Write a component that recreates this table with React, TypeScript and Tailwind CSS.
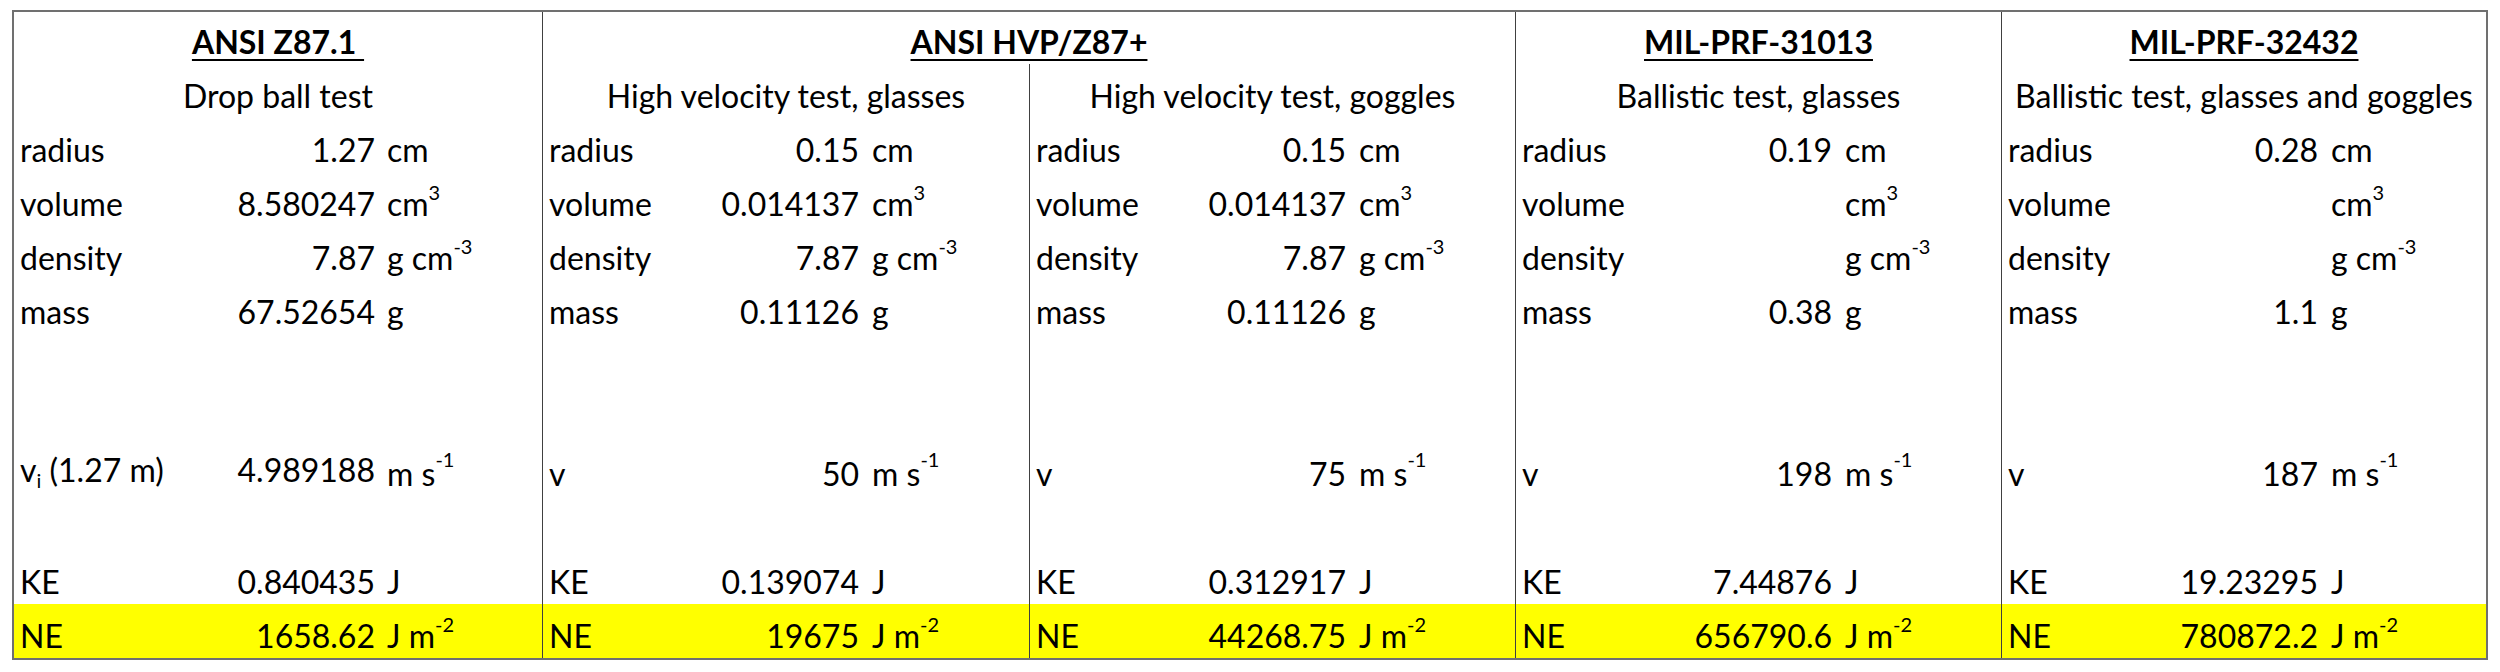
import React from 'react';

interface Block {
  title?: string;
  subtitle: string;
  radius: string;
  volume: string;
  density: string;
  mass: string;
  vLabel: React.ReactNode;
  v: string;
  ke: string;
  ne: string;
}

interface RowData {
  label: React.ReactNode;
  value: string;
  unit: string;
  sup?: string;
  yellow?: boolean;
  high?: boolean;
}

const VI = (
  <>
    v<span className="text-[20px] align-[-6px]">i</span> (1.27 m)
  </>
);

const blocks: Block[] = [
  {
    title: 'ANSI Z87.1\u00a0',
    subtitle: 'Drop ball test',
    radius: '1.27',
    volume: '8.580247',
    density: '7.87',
    mass: '67.52654',
    vLabel: VI,
    v: '4.989188',
    ke: '0.840435',
    ne: '1658.62',
  },
  {
    subtitle: 'High velocity test, glasses',
    radius: '0.15',
    volume: '0.014137',
    density: '7.87',
    mass: '0.11126',
    vLabel: 'v',
    v: '50',
    ke: '0.139074',
    ne: '19675',
  },
  {
    subtitle: 'High velocity test, goggles',
    radius: '0.15',
    volume: '0.014137',
    density: '7.87',
    mass: '0.11126',
    vLabel: 'v',
    v: '75',
    ke: '0.312917',
    ne: '44268.75',
  },
  {
    title: 'MIL-PRF-31013',
    subtitle: 'Ballistic test, glasses',
    radius: '0.19',
    volume: '',
    density: '',
    mass: '0.38',
    vLabel: 'v',
    v: '198',
    ke: '7.44876',
    ne: '656790.6',
  },
  {
    title: 'MIL-PRF-32432',
    subtitle: 'Ballistic test, glasses and goggles',
    radius: '0.28',
    volume: '',
    density: '',
    mass: '1.1',
    vLabel: 'v',
    v: '187',
    ke: '19.23295',
    ne: '780872.2',
  },
];

const Title = ({ text }: { text: string }) => (
  <div className="h-[52px] flex items-end justify-center pb-[6px] leading-none font-bold">
    <span className="underline decoration-2 underline-offset-[5px] whitespace-pre">{text}</span>
  </div>
);

const Cell = ({ row, wide }: { row: RowData | null; wide: boolean }) => {
  if (!row) return <div className="h-[54px]" />;
  return (
    <div
      className={`h-[54px] flex items-end pb-[6px] leading-none whitespace-pre ${
        row.yellow ? 'bg-[#ffff00]' : ''
      }`}
    >
      <div className={`flex justify-between pl-[6px] ${wide ? 'w-[361px]' : 'w-[316px]'}`}>
        <span>{row.label}</span>
        <span>{row.value}</span>
      </div>
      <span className={wide ? 'ml-[12px]' : 'ml-[13px]'}>
        {row.unit}
        {row.sup && (
          <span className={`text-[20px] ${row.high ? 'align-[19px]' : 'align-[16px]'}`}>{row.sup}</span>
        )}
      </span>
    </div>
  );
};

const Column = ({ b, wide = false }: { b: Block; wide?: boolean }) => {
  const rows: (RowData | null)[] = [
    { label: 'radius', value: b.radius, unit: 'cm' },
    { label: 'volume', value: b.volume, unit: 'cm', sup: '3' },
    { label: 'density', value: b.density, unit: 'g cm', sup: '-3' },
    { label: 'mass', value: b.mass, unit: 'g' },
    null,
    null,
    { label: b.vLabel, value: b.v, unit: 'm s', sup: '-1', high: true },
    null,
    { label: 'KE', value: b.ke, unit: 'J' },
    { label: 'NE', value: b.ne, unit: 'J m', sup: '-2', yellow: true },
  ];
  return (
    <div className="flex flex-col">
      <div className="h-[54px] flex items-end justify-center pb-[6px] leading-none whitespace-pre">
        {b.subtitle}
      </div>
      {rows.map((r, i) => (
        <Cell key={i} row={r} wide={wide} />
      ))}
    </div>
  );
};

export default function App() {
  return (
    <div className="w-[2500px] h-[672px] bg-white pt-[10px] pl-[12px] text-black text-[32px] font-['Lato',sans-serif]">
      <div className="w-[2476px] flex border-2 border-[#707070]">
        <div className="w-[528px] flex flex-col">
          <Title text={blocks[0].title!} />
          <Column b={blocks[0]} wide />
        </div>
        <div className="w-[973px] flex flex-col border-l border-[#404040]">
          <Title text="ANSI HVP/Z87+" />
          <div className="flex">
            <div className="w-[486px]">
              <Column b={blocks[1]} />
            </div>
            <div className="w-[486px] border-l border-[#404040]">
              <Column b={blocks[2]} />
            </div>
          </div>
        </div>
        <div className="w-[486px] flex flex-col border-l border-[#404040]">
          <Title text={blocks[3].title!} />
          <Column b={blocks[3]} />
        </div>
        <div className="w-[485px] flex flex-col border-l border-[#404040]">
          <Title text={blocks[4].title!} />
          <Column b={blocks[4]} />
        </div>
      </div>
    </div>
  );
}
